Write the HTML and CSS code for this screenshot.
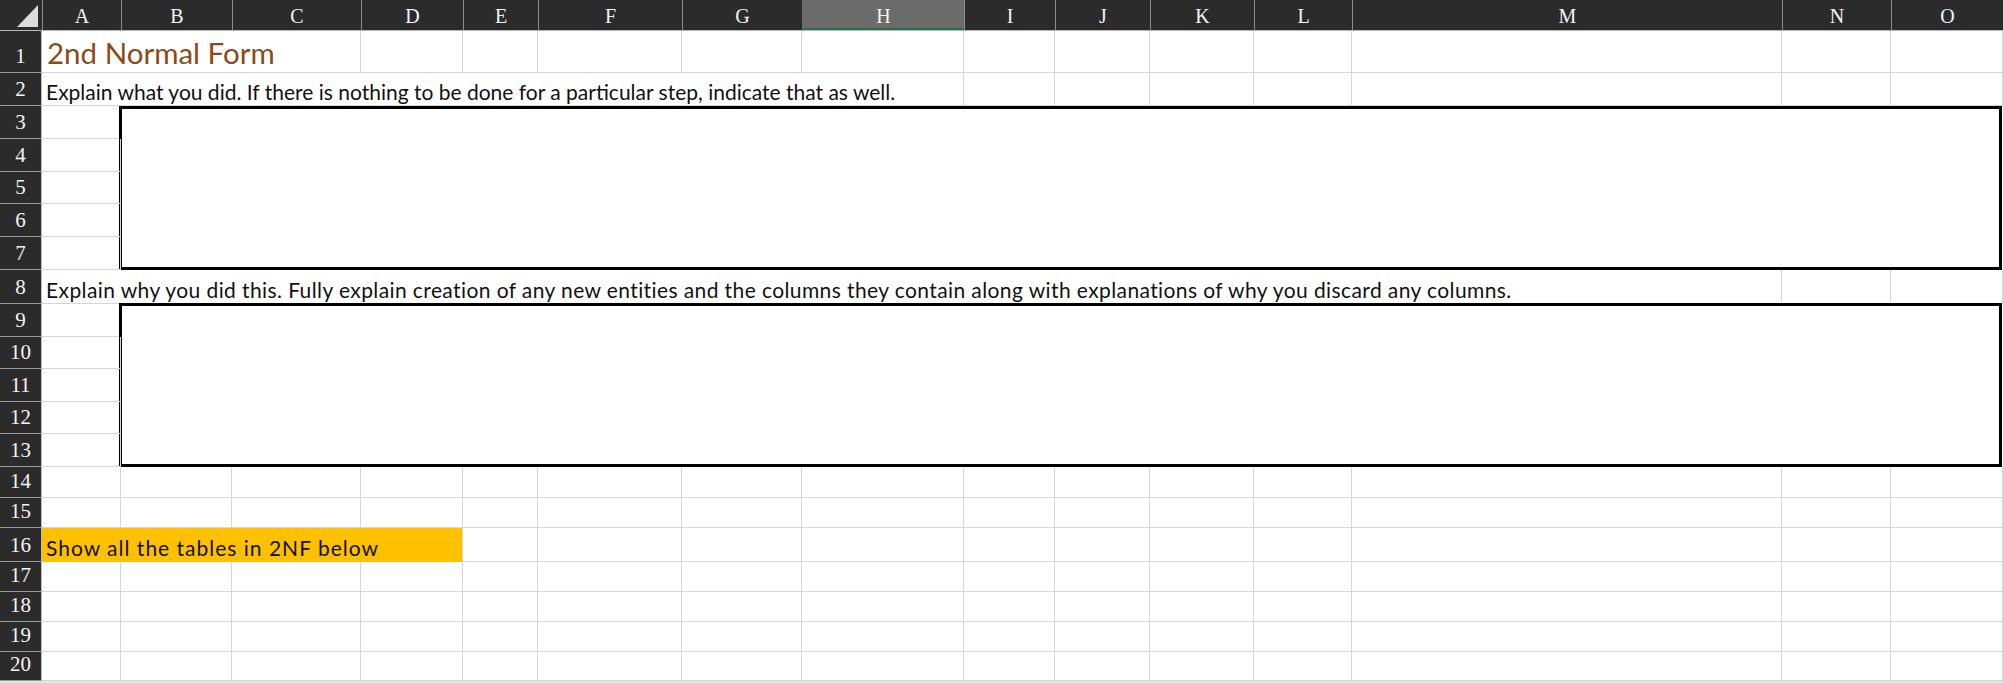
FILE: index.html
```html
<!DOCTYPE html>
<html>
<head>
<meta charset="utf-8">
<link rel="stylesheet" href="styles.css">
</head>
<body>
<div class="sheet">
  <div class="corner"><svg class="tri" width="42" height="31" viewBox="0 0 42 31"><polygon points="17,27 38,27 38,5" fill="#dcdcdc"/></svg></div>
  <div class="ch">A</div><div class="ch">B</div><div class="ch">C</div><div class="ch">D</div><div class="ch">E</div><div class="ch">F</div><div class="ch">G</div><div class="ch sel">H</div><div class="ch">I</div><div class="ch">J</div><div class="ch">K</div><div class="ch">L</div><div class="ch">M</div><div class="ch">N</div><div class="ch">O</div>

  <div class="rh">1</div>
  <div class="c t title span3">2nd Normal Form</div>
  <div class="c"></div><div class="c"></div><div class="c"></div><div class="c"></div><div class="c"></div><div class="c"></div><div class="c"></div><div class="c"></div><div class="c"></div><div class="c"></div><div class="c"></div><div class="c"></div>

  <div class="rh">2</div>
  <div class="c t span8">Explain what you did. If there is nothing to be done for a particular step, indicate that as well.</div>
  <div class="c"></div><div class="c"></div><div class="c"></div><div class="c"></div><div class="c"></div><div class="c"></div><div class="c"></div>

  <div class="rh">3</div><div class="c"></div>
  <div class="box"></div>
  <div class="rh">4</div><div class="c"></div>
  <div class="rh">5</div><div class="c"></div>
  <div class="rh">6</div><div class="c"></div>
  <div class="rh">7</div><div class="c"></div>

  <div class="rh">8</div>
  <div class="c t wide span13">Explain why you did this. Fully explain creation of any new entities and the columns they contain along with explanations of why you discard any columns.</div>
  <div class="c"></div><div class="c"></div>

  <div class="rh">9</div><div class="c"></div>
  <div class="box box2"></div>
  <div class="rh">10</div><div class="c"></div>
  <div class="rh">11</div><div class="c"></div>
  <div class="rh">12</div><div class="c"></div>
  <div class="rh">13</div><div class="c"></div>

  <div class="rh">14</div>
  <div class="c"></div><div class="c"></div><div class="c"></div><div class="c"></div><div class="c"></div><div class="c"></div><div class="c"></div><div class="c"></div><div class="c"></div><div class="c"></div><div class="c"></div><div class="c"></div><div class="c"></div><div class="c"></div><div class="c"></div>

  <div class="rh">15</div>
  <div class="c"></div><div class="c"></div><div class="c"></div><div class="c"></div><div class="c"></div><div class="c"></div><div class="c"></div><div class="c"></div><div class="c"></div><div class="c"></div><div class="c"></div><div class="c"></div><div class="c"></div><div class="c"></div><div class="c"></div>

  <div class="rh">16</div>
  <div class="c t hl span4">Show all the tables in 2NF below</div>
  <div class="c"></div><div class="c"></div><div class="c"></div><div class="c"></div><div class="c"></div><div class="c"></div><div class="c"></div><div class="c"></div><div class="c"></div><div class="c"></div><div class="c"></div>

  <div class="rh">17</div>
  <div class="c"></div><div class="c"></div><div class="c"></div><div class="c"></div><div class="c"></div><div class="c"></div><div class="c"></div><div class="c"></div><div class="c"></div><div class="c"></div><div class="c"></div><div class="c"></div><div class="c"></div><div class="c"></div><div class="c"></div>

  <div class="rh">18</div>
  <div class="c"></div><div class="c"></div><div class="c"></div><div class="c"></div><div class="c"></div><div class="c"></div><div class="c"></div><div class="c"></div><div class="c"></div><div class="c"></div><div class="c"></div><div class="c"></div><div class="c"></div><div class="c"></div><div class="c"></div>

  <div class="rh">19</div>
  <div class="c"></div><div class="c"></div><div class="c"></div><div class="c"></div><div class="c"></div><div class="c"></div><div class="c"></div><div class="c"></div><div class="c"></div><div class="c"></div><div class="c"></div><div class="c"></div><div class="c"></div><div class="c"></div><div class="c"></div>

  <div class="rh">20</div>
  <div class="c"></div><div class="c"></div><div class="c"></div><div class="c"></div><div class="c"></div><div class="c"></div><div class="c"></div><div class="c"></div><div class="c"></div><div class="c"></div><div class="c"></div><div class="c"></div><div class="c"></div><div class="c"></div><div class="c"></div>
</div>
</body>
</html>
```
FILE: styles.css
```css
html {
  background: #e3e3e3;
}
body {
  margin: 0;
  overflow: hidden;
}
.sheet {
  display: grid;
  width: 2003px;
  grid-template-columns: 42px 79px 111px 129px 102px 75px 144px 120px 162px 91px 95px 104px 98px 430px 109px 112px;
  grid-template-rows: 31px 42px 33px 33px 33px 32px 33px 33px 34px 33px 32px 33px 32px 33px 31px 30px 34px 30px 30px 30px 29px;
  background: #ffffff;
}
.corner {
  background: #2b2b2b;
  border-bottom: 1px solid #b8b8b8;
  box-sizing: border-box;
}
.tri {
  display: block;
}
.ch {
  background: #2b2b2b;
  color: #f4f4f4;
  font-family: "Liberation Serif", serif;
  font-size: 20px;
  display: flex;
  align-items: flex-end;
  justify-content: center;
  padding-bottom: 4px;
  box-sizing: border-box;
  border-left: 1px solid #8c8c8c;
  border-bottom: 1px solid #b8b8b8;
  line-height: 1;
}
.ch.sel {
  background: #6b6b6b;
  border-left-color: #6b6b6b;
  box-shadow: inset 0 -2px 0 #217346;
}
.rh {
  background: #2b2b2b;
  color: #f4f4f4;
  font-family: "Liberation Serif", serif;
  font-size: 21px;
  line-height: 1;
  display: flex;
  align-items: flex-end;
  justify-content: center;
  padding-bottom: 5px;
  box-sizing: border-box;
  border-bottom: 1px solid #9a9a9a;
  border-right: 1px solid #bdbdbd;
}
.c {
  box-sizing: border-box;
  border-right: 1px solid #d6d6d6;
  border-bottom: 1px solid #d6d6d6;
  min-width: 0;
}
.t {
  font-family: Lato, "Open Sans", sans-serif;
  font-size: 21px;
  color: #111111;
  white-space: nowrap;
  display: flex;
  align-items: flex-end;
  padding: 0 0 3px 4px;
  line-height: 1;
}
.t.wide {
  letter-spacing: 0.4px;
}
.title {
  font-size: 29.5px;
  color: #8c4a18;
  padding: 0 0 5px 5px;
}
.hl {
  background: #ffc000;
  color: #111111;
  border-bottom-color: #ffc000;
  letter-spacing: 1px;
}
.span3 { grid-column: span 3; }
.span4 { grid-column: span 4; }
.span8 { grid-column: span 8; }
.span13 { grid-column: span 13; }
.box {
  grid-column: span 14;
  grid-row: span 5;
  border: 3px solid #000000;
  background: #ffffff;
  margin: 0 1px 0 -2px;
}
.box2 {
  margin-top: -1px;
}
```
